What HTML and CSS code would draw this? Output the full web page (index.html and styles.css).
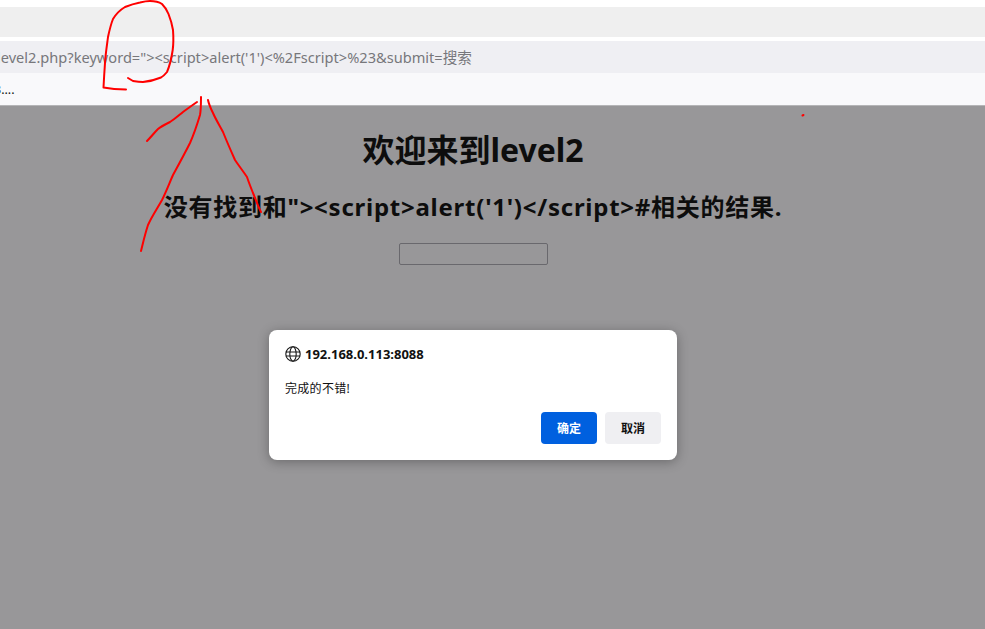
FILE: index.html
```html
<!DOCTYPE html>
<html lang="zh">
<head>
<meta charset="utf-8">
<title>level2</title>
<link rel="stylesheet" href="styles.css">
</head>
<body>
<header class="chrome">
  <div class="tabs"></div>
  <div class="url"><span class="url-text">level2.php?keyword="&gt;&lt;script&gt;alert('1')&lt;%2Fscript&gt;%23&amp;submit=搜索</span></div>
  <div class="bookmarks"><span class="bookmark-text">3....</span></div>
</header>
<main class="page">
  <h1 class="title">欢迎来到level2</h1>
  <h2 class="result">没有找到和"&gt;&lt;script&gt;alert('1')&lt;/script&gt;#相关的结果.</h2>
  <input class="search" type="text">
</main>
<section class="dialog">
  <div class="origin">
    <svg class="globe" width="16" height="16" viewBox="0 0 16 16" fill="none" stroke="#1a1a1a" stroke-width="1.1">
      <circle cx="8" cy="8" r="7.2"/>
      <ellipse cx="8" cy="8" rx="3.2" ry="7.2"/>
      <path d="M.8 6h14.4M.8 10h14.4"/>
    </svg>
    <span>192.168.0.113:8088</span>
  </div>
  <p class="message">完成的不错!</p>
  <div class="actions">
    <button class="btn primary">确定</button>
    <button class="btn">取消</button>
  </div>
</section>
<svg class="ink" width="985" height="629" viewBox="0 0 985 629" fill="none" stroke="#f00" stroke-width="2" stroke-linecap="round" stroke-linejoin="round">
  <path d="M126 89.5 C118 89.5 111 89 103.5 87.5 C104 78 104.5 70 105 63 C105.5 54 107 45 108 37 C109.5 30 111 24 113 19 C116 14 120 10 125 7 C130 5 135 3.5 140 2.5 C144 1.5 147 1 150 1 C155 1 159 2 162 4 C165 7 167 10 168.5 14 C170.5 19 172 24 173 30 C173.5 37 173.5 44 172.7 50 C171.5 58 170 65 167 72 C165 74.5 163.5 76 161 77.5 C155 80 149 81.5 143 82 C139 82 136 81.5 133 81 L128 78"/>
  <path d="M197 102 C192 105.5 187 109 183 112 C178 116 174 119.5 170 122 C165 124.5 161 126.5 158 129 C154 133 151 137 147 141"/>
  <path d="M201 97 C201 104 201 110 200 115 C197 125 194 134 190 143 C185 153 179 164 173 175 C169 184 166 192 162 200 C157 209 152 216 148 225 C145 234 143 243 141 251"/>
  <path d="M208 100 C209 105 211 109 213 113 C216 120 220 126 223 132 C227 142 231 151 235 160 C239 166 243 171 247 177 C249 183 251 188 253 193 C256 200 258 206 261 212"/>
  <path d="M802.5 115.5 L803.5 115"/>
</svg>
</body>
</html>
```
FILE: styles.css
```css
* { box-sizing: border-box; }
html, body { margin: 0; height: 100%; }
body {
  display: flex;
  flex-direction: column;
  height: 629px;
  overflow: hidden;
  background: #989799;
  font-family: "Noto Sans", "Noto Sans CJK SC", sans-serif;
  color: #0d0d0d;
}
.chrome {
  background: #fff;
  padding-top: 7px;
  border-bottom: 1px solid #b5b5b7;
}
.tabs { height: 30px; background: #efefef; }
.url {
  margin-top: 4px;
  height: 32px;
  background: #efeff3;
  display: flex;
  align-items: center;
  overflow: hidden;
}
.url-text { margin-left: -3px; font-size: 14.6px; line-height: 20px; margin-top: -1px; color: #77777b; white-space: nowrap; }
.bookmarks {
  height: 32px;
  background: #f9f9fb;
  display: flex;
  align-items: center;
  overflow: hidden;
}
.bookmark-text { margin-left: -6px; font-size: 12.5px; color: #111; }
.page {
  flex: 1;
  width: 946px;
  display: flex;
  flex-direction: column;
  align-items: center;
}
.title {
  margin: 21px 0 0;
  font-size: 32px;
  line-height: 46px;
  font-weight: 700;
  white-space: nowrap;
}
.result {
  margin: 16px 0 0;
  font-size: 24px;
  line-height: 36px;
  font-weight: 700;
  letter-spacing: .75px;
  white-space: nowrap;
}
.search {
  margin-top: 18px;
  width: 149px;
  height: 22px;
  padding: 0;
  background: transparent;
  border: 1px solid #69686d;
  border-radius: 2px;
}
.dialog {
  position: absolute;
  left: 269px;
  top: 330px;
  width: 408px;
  height: 130px;
  padding: 16px;
  background: #fff;
  border-radius: 8px;
  box-shadow: 0 2px 12px rgba(0, 0, 0, .3);
  display: flex;
  flex-direction: column;
}
.origin {
  display: flex;
  align-items: center;
  gap: 4px;
  height: 16px;
  font-size: 13px;
  font-weight: 700;
  color: #111;
}
.message {
  margin: 18px 0 0;
  font-size: 12px;
  line-height: 18px;
  letter-spacing: .3px;
  color: #111;
}
.actions {
  margin-top: auto;
  display: flex;
  justify-content: flex-end;
  gap: 8px;
}
.btn {
  width: 56px;
  height: 32px;
  padding: 0 0 2px;
  border: 0;
  border-radius: 4px;
  background: #efeff2;
  color: #111;
  font: 700 12px "Noto Sans CJK SC", sans-serif;
}
.btn.primary { background: #0060df; color: #fff; }
.ink { position: absolute; left: 0; top: 0; pointer-events: none; }
```
